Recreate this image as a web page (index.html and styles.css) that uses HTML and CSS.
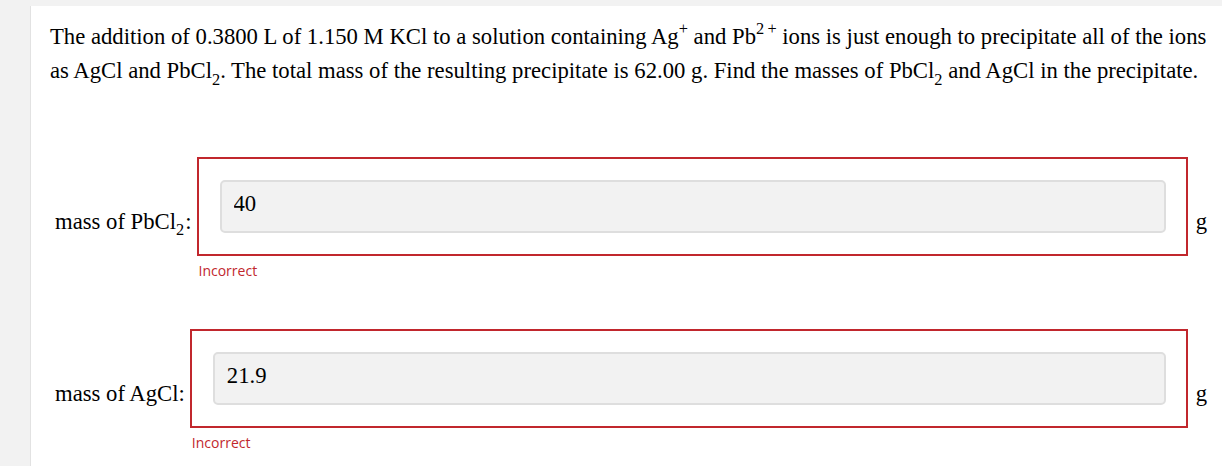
FILE: index.html
```html
<!DOCTYPE html>
<html>
<head>
<meta charset="utf-8">
<link rel="stylesheet" href="styles.css">
</head>
<body>
<div class="card">
  <p class="question">The addition of 0.3800 L of 1.150 M KCl to a solution containing Ag<sup>+</sup> and Pb<sup>2&#8201;+</sup> ions is just enough to precipitate all of the ions as AgCl and PbCl<sub>2</sub>. The total mass of the resulting precipitate is 62.00 g. Find the masses of PbCl<sub>2</sub> and AgCl in the precipitate.</p>
  <div class="answers">
    <div class="row">
      <label class="label">mass of PbCl<sub>2</sub>:</label>
      <div class="field">
        <div class="box"><input class="input" type="text" value="40" readonly></div>
        <div class="feedback">Incorrect</div>
      </div>
      <span class="unit">g</span>
    </div>
    <div class="row">
      <label class="label">mass of AgCl:</label>
      <div class="field">
        <div class="box"><input class="input" type="text" value="21.9" readonly></div>
        <div class="feedback">Incorrect</div>
      </div>
      <span class="unit">g</span>
    </div>
  </div>
</div>
</body>
</html>
```
FILE: styles.css
```css
html, body {
  margin: 0;
  padding: 0;
  background: #f2f2f2;
}
.card {
  margin: 6px 0 0 30px;
  border-left: 1px solid #e2e2e2;
  background: #fff;
  padding: 14px 12px 20px 19px;
  min-height: 440px;
  box-sizing: border-box;
  font-family: "Liberation Serif", "Times New Roman", serif;
  color: #000;
}
.question {
  margin: 0;
  font-size: 22.7px;
  line-height: 34px;
}
sup, sub {
  font-size: 72%;
  line-height: 0;
  position: relative;
  vertical-align: baseline;
}
sup { top: -0.6em; }
sub { top: 0.4em; }
.answers {
  margin-top: 69px;
  margin-right: 3px;
  display: flex;
  flex-direction: column;
  gap: 48px;
}
.row {
  display: flex;
  align-items: center;
  padding-left: 5px;
}
.label {
  font-size: 22.7px;
  line-height: 25px;
  padding-top: 4px;
  white-space: nowrap;
}
.label sub {
  margin-right: 1px;
}
.field {
  flex: 1;
  margin-left: 5px;
  display: flex;
  flex-direction: column;
}
.box {
  border: 2px solid #c1272d;
  padding: 21px 20px 21px 21px;
}
.input {
  display: block;
  width: 100%;
  height: 53px;
  box-sizing: border-box;
  border: 2px solid #dedede;
  border-radius: 5px;
  background: #f2f2f2;
  padding: 0 12px 6px;
  font-family: "Liberation Serif", "Times New Roman", serif;
  font-size: 22.7px;
  color: #000;
  outline: none;
}
.feedback {
  margin-top: 5px;
  padding-left: 2px;
  font-family: "Open Sans", "Noto Sans", sans-serif;
  font-size: 14px;
  line-height: 20px;
  color: #c1272d;
}
.unit {
  margin-left: 8px;
  font-size: 22.7px;
  line-height: 25px;
  padding-top: 4px;
}
```
